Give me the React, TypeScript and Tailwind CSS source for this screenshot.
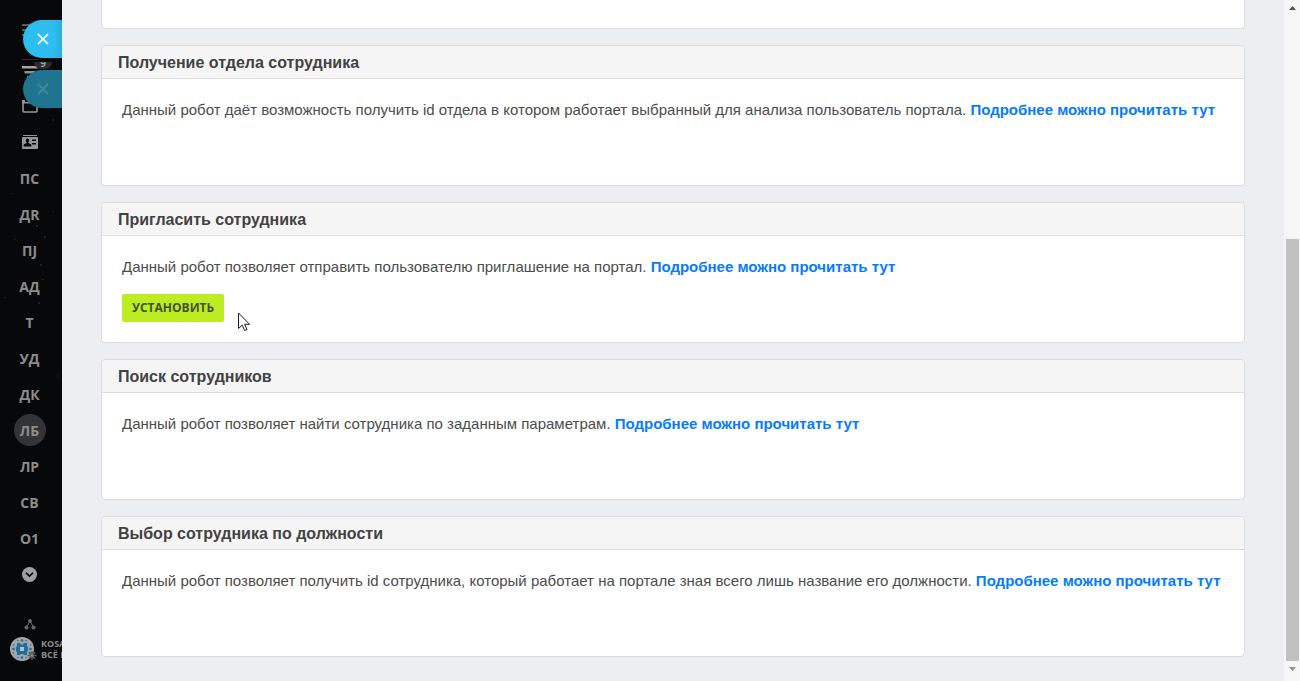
import { type ReactElement } from "react";

interface Robot {
  id: string;
  title: string;
  description: string;
  canInstall?: boolean;
}

interface CloseTabProps {
  label: string;
  dimmed?: boolean;
}

const robots: Robot[] = [
  {
    id: "department",
    title: "Получение отдела сотрудника",
    description:
      "Данный робот даёт возможность получить id отдела в котором работает выбранный для анализа пользователь портала.",
  },
  {
    id: "invite",
    title: "Пригласить сотрудника",
    description: "Данный робот позволяет отправить пользователю приглашение на портал.",
    canInstall: true,
  },
  {
    id: "search",
    title: "Поиск сотрудников",
    description: "Данный робот позволяет найти сотрудника по заданным параметрам.",
  },
  {
    id: "position",
    title: "Выбор сотрудника по должности",
    description:
      "Данный робот позволяет получить id сотрудника, который работает на портале зная всего лишь название его должности.",
  },
];

const menuItems: string[] = ["ПС", "ДR", "ПJ", "АД", "Т", "УД", "ДК", "ЛБ", "ЛР", "СВ", "О1"];
const activeItem = "ЛБ";

const MenuIcon = (): ReactElement => (
  <svg width="16" height="14" viewBox="0 0 16 14" fill="#5a5b5d">
    <path d="M0 1h16v2H0zM0 6h16v2H0zM0 11h16v2H0z" />
  </svg>
);

const FilterIcon = (): ReactElement => (
  <svg width="16" height="14" viewBox="0 0 16 14">
    <path d="M0 2h16v2.500H0z" fill="#a5a5a5" />
    <path d="M2.500 7h11v2.500h-11zM5 12h6v2H5z" fill="#8f8f8f" />
  </svg>
);

const CalendarIcon = (): ReactElement => (
  <svg width="16" height="14" viewBox="0 0 16 14" fill="none">
    <path d="M1 2.500V12a1 1 0 0 0 1 1h12a1 1 0 0 0 1-1V2.500" stroke="#959595" strokeWidth="1.600" />
    <path d="M0 1h3v2h3V1h4v2h3V1h3v3.500H0z" fill="#959595" />
  </svg>
);

const ContactIcon = (): ReactElement => (
  <svg width="16" height="14" viewBox="0 0 16 14">
    <path d="M1 0h14v1H1z" fill="#959595" />
    <rect y="2" width="16" height="12" rx="1" fill="#959595" />
    <path
      d="M5.500 3.500c1 0 1.700.8 1.600 2 0 .8-.3 1.400-.7 1.800v.8l2.100.9c.8.300 1 1 1 2.500H1.500c0-1.500.2-2.200 1-2.500l2.100-.9v-.8c-.4-.4-.7-1-.7-1.800-.1-1.200.6-2 1.600-2z"
      fill="#07080a"
    />
    <path d="M10 4.500h4V6h-4zM10 8h4v1.500h-4z" fill="#07080a" />
  </svg>
);

const MoreIcon = (): ReactElement => (
  <svg width="15" height="15" viewBox="0 0 15 15">
    <circle cx="7.500" cy="7.500" r="7.500" fill="#a0a0a0" />
    <path
      d="M4.300 6.200l3.200 3 3.200-3"
      fill="none"
      stroke="#07080a"
      strokeWidth="1.600"
      strokeLinecap="round"
    />
  </svg>
);

const StructureIcon = (): ReactElement => (
  <svg width="12" height="11" viewBox="0 0 12 11">
    <path d="M3 7.500L5.500 3M9 7.500L6.500 3" stroke="#68696b" strokeWidth="1" />
    <circle cx="6" cy="2" r="2" fill="#68696b" />
    <circle cx="2.500" cy="8.500" r="2" fill="#68696b" />
    <circle cx="9.500" cy="8.500" r="2" fill="#68696b" />
  </svg>
);

const LogoIcon = (): ReactElement => (
  <svg width="27" height="24" viewBox="0 0 27 24" className="shrink-0">
    <circle cx="12" cy="12" r="12" fill="#a3a5a6" />
    <g fill="#1f6fa0">
      <path d="M7 6h3.500v1.500h3V6H17v3.500h1v5h-1V18h-3.500v-1h-3v1H7v-3.500H6v-5h1z" />
      <circle cx="8" cy="3.500" r=".8" />
      <circle cx="12" cy="3.500" r="1.300" />
      <circle cx="16" cy="3.500" r=".8" />
      <circle cx="8" cy="20.500" r=".8" />
      <circle cx="12" cy="20.500" r="1.300" />
      <circle cx="16" cy="20.500" r=".8" />
      <circle cx="3.500" cy="8" r=".8" />
      <circle cx="3.500" cy="12" r="1.300" />
      <circle cx="3.500" cy="16" r=".8" />
      <circle cx="20.500" cy="8" r=".8" />
      <circle cx="20.500" cy="12" r="1.300" />
      <circle cx="20.500" cy="16" r=".8" />
    </g>
    <path d="M10 10h4v4h-4z" fill="#b4bec3" />
    <path
      d="M22 14v9M17.500 18.500h9M18.800 15.300l6.400 6.400M25.200 15.300l-6.400 6.400"
      stroke="#55575a"
      strokeWidth="1.500"
    />
    <circle cx="22" cy="18.500" r="1.200" fill="#8c8e90" />
  </svg>
);

const Stars = (): ReactElement => (
  <svg width="62" height="681" viewBox="0 0 62 681" className="absolute left-0 top-0">
    <g fill="#14272b">
      <rect x="44" y="236" width="2" height="2" />
      <rect x="14" y="239" width="2" height="1" />
      <rect x="40" y="264" width="2" height="2" />
      <rect x="42" y="279" width="2" height="1" />
      <rect x="38" y="302" width="2" height="2" />
      <rect x="36" y="225" width="2" height="2" />
    </g>
    <g fill="#17181a">
      <rect x="11" y="193" width="2" height="1" />
      <rect x="52" y="211" width="2" height="1" />
      <rect x="52" y="119" width="2" height="2" />
      <rect x="4" y="297" width="2" height="1" />
      <rect x="57" y="375" width="1" height="2" />
    </g>
  </svg>
);

const CursorIcon = (): ReactElement => (
  <svg
    width="13"
    height="20"
    viewBox="0 0 13 20"
    className="pointer-events-none absolute left-full top-full ml-3.5 -mt-2.5"
  >
    <path
      d="M.5 1v15.500l3.700-3.400 2.400 5.400 2.400-1-2.400-5.200h5z"
      fill="white"
      stroke="#1b1b2b"
      strokeWidth="1"
    />
  </svg>
);

const CloseTab = ({ label, dimmed = false }: CloseTabProps): ReactElement => (
  <button
    type="button"
    aria-label={label}
    className={`flex h-[38px] w-[39px] items-center justify-center rounded-l-full ${
      dimmed
        ? "bg-[#1f748f] text-[#3f889f]"
        : "bg-linear-to-r from-[#2dbdee] from-80% to-[#2aaedb] text-[#d7f2fc]"
    }`}
  >
    <svg width="12" height="12" viewBox="0 0 12 12" fill="none">
      <path d="M1 1l10 10M11 1L1 11" stroke="currentColor" strokeWidth="2" />
    </svg>
  </button>
);

const Sidebar = (): ReactElement => (
  <aside className="relative w-[62px] shrink-0 overflow-hidden bg-[#07080a] font-['Open_Sans',sans-serif]">
    <Stars />
    <nav className="relative flex w-[60px] flex-col pt-3">
      <div className="flex h-9 items-center justify-center">
        <MenuIcon />
      </div>
      <div className="mt-1 flex h-9 items-center justify-center border-t border-transparent">
        <FilterIcon />
      </div>
      <span className="absolute left-[22px] top-[59px] h-px w-4 bg-[#2b2c2e]" />
      <span className="absolute left-[34px] top-[62px] flex h-[7px] w-[18px] items-end justify-center overflow-hidden rounded-b-full bg-[#2b2c2e] text-[10px] font-bold leading-[12px] text-[#a0a0a0]">
        9
      </span>
      <div className="flex h-9 items-center justify-center">
        <CalendarIcon />
      </div>
      <div className="flex h-9 items-center justify-center">
        <ContactIcon />
      </div>
      {menuItems.map((item) => (
        <a key={item} href="#" className="flex h-9 items-center justify-center">
          <span
            className={`flex size-8 items-center justify-center rounded-full pr-px text-[14px] font-bold text-[#8c8c8c] ${
              item === activeItem ? "bg-[#333335]" : ""
            }`}
          >
            {item}
          </span>
        </a>
      ))}
      <div className="flex h-9 items-center justify-center pr-px">
        <MoreIcon />
      </div>
      <div className="mt-[27px] flex justify-center">
        <StructureIcon />
      </div>
    </nav>
    <div className="relative mt-[7px] flex w-40 items-center gap-1 pl-2.5">
      <LogoIcon />
      <p className="text-[9px] font-bold leading-[11px] text-[#8c8c8c]">
        KOSAREV
        <br />
        ВСЁ ПРО
      </p>
    </div>
    <div className="absolute right-0 top-5 flex flex-col gap-3">
      <CloseTab label="Закрыть" />
      <CloseTab label="Закрыть предыдущую" dimmed />
    </div>
  </aside>
);

const RobotCard = ({ title, description, canInstall = false }: Robot): ReactElement => (
  <section className="rounded border border-[#dcdcdc] bg-white">
    <h2 className="rounded-t border-b border-[#dcdcdc] bg-[#f5f5f5] px-4 pt-0.5 text-[16px] font-bold leading-[30px] text-[#424242]">
      {title}
    </h2>
    <div className="min-h-[106px] p-5">
      <p className="text-[15px] leading-[22px] text-[#4c4c4c]">
        {description}{" "}
        <a href="#" className="font-bold text-[#067bfb]">
          Подробнее можно прочитать тут
        </a>
      </p>
      {canInstall && (
        <div className="relative mt-4 flex w-fit">
          <button
            type="button"
            className="h-7 rounded-xs bg-[#bbed21] px-2.5 text-[12px] font-bold uppercase text-[#474d35] font-['Open_Sans',sans-serif]"
          >
            Установить
          </button>
          <CursorIcon />
        </div>
      )}
    </div>
  </section>
);

const Scrollbar = (): ReactElement => (
  <div aria-hidden="true" className="flex w-4 shrink-0 flex-col items-center bg-[#f6f6f6]">
    <div className="flex h-[15px] items-center">
      <svg width="7" height="4" viewBox="0 0 7 4" fill="#505050">
        <path d="M0 4h7L3.500 0z" />
      </svg>
    </div>
    <div className="flex-[224]" />
    <div className="w-[13px] flex-[422] bg-[#c1c1c1]" />
    <div className="flex h-5 items-center pb-1">
      <svg width="7" height="4" viewBox="0 0 7 4" fill="#8f8f8f">
        <path d="M0 0h7L3.500 4z" />
      </svg>
    </div>
  </div>
);

const App = (): ReactElement => (
  <div className="flex h-screen overflow-hidden bg-[#ebeff2] font-['Liberation_Sans',Arial,sans-serif]">
    <Sidebar />
    <main className="flex min-w-0 flex-1 flex-col gap-4 overflow-hidden px-[39px] pb-6">
      <div className="h-[29px] shrink-0 rounded-b border border-t-0 border-[#dcdcdc] bg-white" />
      {robots.map((robot) => (
        <RobotCard key={robot.id} {...robot} />
      ))}
    </main>
    <Scrollbar />
  </div>
);

export default App;
